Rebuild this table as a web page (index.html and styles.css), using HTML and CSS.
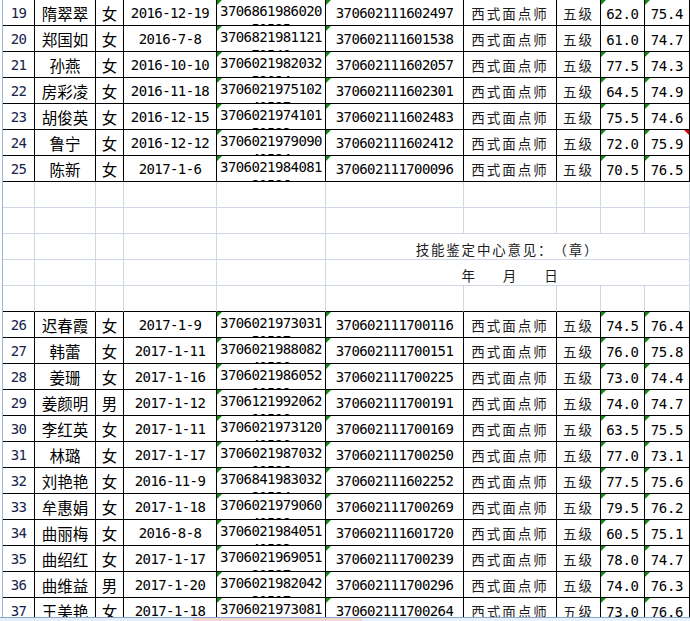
FILE: index.html
```html
<!DOCTYPE html>
<html lang="zh-CN">
<head>
<meta charset="utf-8">
<title>技能鉴定名单</title>
<link rel="stylesheet" href="styles.css">
</head>
<body>
<div class="sheet">
  <div class="row"><div class="c num idx">19</div><div class="c name">隋翠翠</div><div class="c name">女</div><div class="c num">2016-12-19</div><div class="c num id tag">370686198602051525</div><div class="c num tag">370602111602497</div><div class="c job">西式面点师</div><div class="c job">五级</div><div class="c score tag">62.0</div><div class="c score tag">75.4</div></div>
  <div class="row"><div class="c num idx">20</div><div class="c name">郑国如</div><div class="c name">女</div><div class="c num">2016-7-8</div><div class="c num id tag">370682198112171540</div><div class="c num tag">370602111601538</div><div class="c job">西式面点师</div><div class="c job">五级</div><div class="c score">61.0</div><div class="c score">74.7</div></div>
  <div class="row"><div class="c num idx">21</div><div class="c name">孙燕</div><div class="c name">女</div><div class="c num">2016-10-10</div><div class="c num id tag">370602198203252024</div><div class="c num tag">370602111602057</div><div class="c job">西式面点师</div><div class="c job">五级</div><div class="c score tag">77.5</div><div class="c score tag">74.3</div></div>
  <div class="row"><div class="c num idx">22</div><div class="c name">房彩凌</div><div class="c name">女</div><div class="c num">2016-11-18</div><div class="c num id tag">370602197510241527</div><div class="c num tag">370602111602301</div><div class="c job">西式面点师</div><div class="c job">五级</div><div class="c score tag">64.5</div><div class="c score tag">74.9</div></div>
  <div class="row"><div class="c num idx">23</div><div class="c name">胡俊英</div><div class="c name">女</div><div class="c num">2016-12-15</div><div class="c num id tag">370602197410151523</div><div class="c num tag">370602111602483</div><div class="c job">西式面点师</div><div class="c job">五级</div><div class="c score tag">75.5</div><div class="c score tag">74.6</div></div>
  <div class="row"><div class="c num idx">24</div><div class="c name">鲁宁</div><div class="c name">女</div><div class="c num">2016-12-12</div><div class="c num id tag">370602197909041524</div><div class="c num tag">370602111602412</div><div class="c job">西式面点师</div><div class="c job">五级</div><div class="c score tag">72.0</div><div class="c score tag note">75.9</div></div>
  <div class="row"><div class="c num idx">25</div><div class="c name">陈新</div><div class="c name">女</div><div class="c num">2017-1-6</div><div class="c num id tag">370602198408121526</div><div class="c num tag">370602111700096</div><div class="c job">西式面点师</div><div class="c job">五级</div><div class="c score tag">70.5</div><div class="c score tag">76.5</div></div>

  <div class="row blank"><div class="c"></div><div class="c"></div><div class="c"></div><div class="c"></div><div class="c"></div><div class="c"></div><div class="c"></div><div class="c"></div><div class="c"></div><div class="c"></div></div>
  <div class="row blank"><div class="c"></div><div class="c"></div><div class="c"></div><div class="c"></div><div class="c"></div><div class="c"></div><div class="c"></div><div class="c"></div><div class="c"></div><div class="c"></div></div>
  <div class="row blank"><div class="c"></div><div class="c"></div><div class="c"></div><div class="c"></div><div class="c"></div><div class="c merge note-text">技能鉴定中心意见：（章）</div></div>
  <div class="row blank"><div class="c"></div><div class="c"></div><div class="c"></div><div class="c"></div><div class="c"></div><div class="c merge note-text date-line">年<i class="sp"></i>月<i class="sp"></i>日</div></div>
  <div class="row blank last"><div class="c"></div><div class="c"></div><div class="c"></div><div class="c"></div><div class="c"></div><div class="c"></div><div class="c"></div><div class="c"></div><div class="c"></div><div class="c"></div></div>

  <div class="row"><div class="c num idx">26</div><div class="c name">迟春霞</div><div class="c name">女</div><div class="c num">2017-1-9</div><div class="c num id tag">370602197303151527</div><div class="c num tag">370602111700116</div><div class="c job">西式面点师</div><div class="c job">五级</div><div class="c score tag">74.5</div><div class="c score tag">76.4</div></div>
  <div class="row"><div class="c num idx">27</div><div class="c name">韩蕾</div><div class="c name">女</div><div class="c num">2017-1-11</div><div class="c num id tag">370602198808241520</div><div class="c num tag">370602111700151</div><div class="c job">西式面点师</div><div class="c job">五级</div><div class="c score tag">76.0</div><div class="c score tag">75.8</div></div>
  <div class="row"><div class="c num idx">28</div><div class="c name">姜珊</div><div class="c name">女</div><div class="c num">2017-1-16</div><div class="c num id tag">370602198605211522</div><div class="c num tag">370602111700225</div><div class="c job">西式面点师</div><div class="c job">五级</div><div class="c score tag">73.0</div><div class="c score tag">74.4</div></div>
  <div class="row"><div class="c num idx">29</div><div class="c name">姜颜明</div><div class="c name">男</div><div class="c num">2017-1-12</div><div class="c num id tag">370612199206211518</div><div class="c num tag">370602111700191</div><div class="c job">西式面点师</div><div class="c job">五级</div><div class="c score tag">74.0</div><div class="c score tag">74.7</div></div>
  <div class="row"><div class="c num idx">30</div><div class="c name">李红英</div><div class="c name">女</div><div class="c num">2017-1-11</div><div class="c num id tag">370602197312041528</div><div class="c num tag">370602111700169</div><div class="c job">西式面点师</div><div class="c job">五级</div><div class="c score tag">63.5</div><div class="c score tag">75.5</div></div>
  <div class="row"><div class="c num idx">31</div><div class="c name">林璐</div><div class="c name">女</div><div class="c num">2017-1-17</div><div class="c num id tag">370602198703211526</div><div class="c num tag">370602111700250</div><div class="c job">西式面点师</div><div class="c job">五级</div><div class="c score tag">77.0</div><div class="c score tag">73.1</div></div>
  <div class="row"><div class="c num idx">32</div><div class="c name">刘艳艳</div><div class="c name">女</div><div class="c num">2016-11-9</div><div class="c num id tag">370684198303221524</div><div class="c num tag">370602111602252</div><div class="c job">西式面点师</div><div class="c job">五级</div><div class="c score tag">77.5</div><div class="c score tag">75.6</div></div>
  <div class="row"><div class="c num idx">33</div><div class="c name">牟惠娟</div><div class="c name">女</div><div class="c num">2017-1-18</div><div class="c num id tag">370602197906041529</div><div class="c num tag">370602111700269</div><div class="c job">西式面点师</div><div class="c job">五级</div><div class="c score tag">79.5</div><div class="c score tag">76.2</div></div>
  <div class="row"><div class="c num idx">34</div><div class="c name">曲丽梅</div><div class="c name">女</div><div class="c num">2016-8-8</div><div class="c num id tag">370602198405141523</div><div class="c num tag">370602111601720</div><div class="c job">西式面点师</div><div class="c job">五级</div><div class="c score tag">60.5</div><div class="c score tag">75.1</div></div>
  <div class="row"><div class="c num idx">35</div><div class="c name">曲绍红</div><div class="c name">女</div><div class="c num">2017-1-17</div><div class="c num id tag">370602196905121527</div><div class="c num tag">370602111700239</div><div class="c job">西式面点师</div><div class="c job">五级</div><div class="c score tag">78.0</div><div class="c score tag">74.7</div></div>
  <div class="row"><div class="c num idx">36</div><div class="c name">曲维益</div><div class="c name">男</div><div class="c num">2017-1-20</div><div class="c num id tag">370602198204231517</div><div class="c num tag">370602111700296</div><div class="c job">西式面点师</div><div class="c job">五级</div><div class="c score tag">74.0</div><div class="c score tag">76.3</div></div>
  <div class="row"><div class="c num idx">37</div><div class="c name">王美艳</div><div class="c name">女</div><div class="c num">2017-1-18</div><div class="c num id tag">370602197308141526</div><div class="c num tag">370602111700264</div><div class="c job">西式面点师</div><div class="c job">五级</div><div class="c score tag">73.0</div><div class="c score tag">76.6</div></div>
</div>
<div class="taskbar"></div>
</body>
</html>
```
FILE: styles.css
```css
html, body {
  margin: 0;
  padding: 0;
}
body {
  width: 690px;
  height: 621px;
  overflow: hidden;
  background: #fff;
  font-family: "Noto Sans CJK SC", "Noto Sans", sans-serif;
  color: #000;
  text-spacing-trim: space-all;
}
.sheet {
  margin-left: 2px;
  border-left: 1px solid #9fb5d5;
}
.row {
  display: grid;
  grid-template-columns: 32px 61px 28px 93px 109px 138px 93px 44px 44px 45px;
  height: 26px;
}
.c {
  box-sizing: border-box;
  height: 26px;
  border-right: 1px solid #000;
  border-bottom: 1px solid #000;
  display: flex;
  align-items: center;
  justify-content: center;
  position: relative;
  white-space: nowrap;
  overflow: hidden;
}
.row.blank .c {
  border-color: #d0d7e5;
}
.row.blank.last .c {
  border-bottom-color: #000;
}
.num {
  font-family: "DejaVu Sans Mono", "Liberation Mono", monospace;
  font-size: 14px;
  letter-spacing: -0.6px;
  padding-top: 1px;
}
.idx {
  color: #15234a;
}
.name {
  font-size: 15.5px;
  padding-top: 1px;
}
.id {
  display: block;
  white-space: normal;
  word-break: break-all;
  text-align: center;
  line-height: 18px;
  padding-top: 2px;
}
.job {
  font-size: 13.5px;
  letter-spacing: 2px;
  color: #1c1c1c;
  padding-top: 1px;
}
.score {
  font-family: "DejaVu Sans Mono", "Liberation Mono", monospace;
  font-size: 14px;
  letter-spacing: -0.3px;
  padding-top: 2px;
}
.tag::before {
  content: "";
  position: absolute;
  left: 0;
  top: 0;
  border-top: 5px solid #138a13;
  border-right: 5px solid transparent;
}
.note::after {
  content: "";
  position: absolute;
  right: 0;
  top: 0;
  border-top: 5px solid #e60000;
  border-left: 5px solid transparent;
}
.merge {
  grid-column: span 5;
}
.note-text {
  font-size: 13.5px;
  letter-spacing: 1.8px;
  color: #1c1c1c;
  padding-top: 4px;
}
.date-line {
  padding-left: 6px;
}
.sp {
  display: inline-block;
  width: 26px;
}
.taskbar {
  position: fixed;
  left: 0;
  right: 0;
  bottom: 0;
  height: 3px;
  border-top: 1px solid #8aa8d2;
  background: linear-gradient(to right, #e6eef9 0, #e6eef9 193px, #f2d8c6 193px, #f2d8c6 362px, #e9f1fb 362px);
}
```
